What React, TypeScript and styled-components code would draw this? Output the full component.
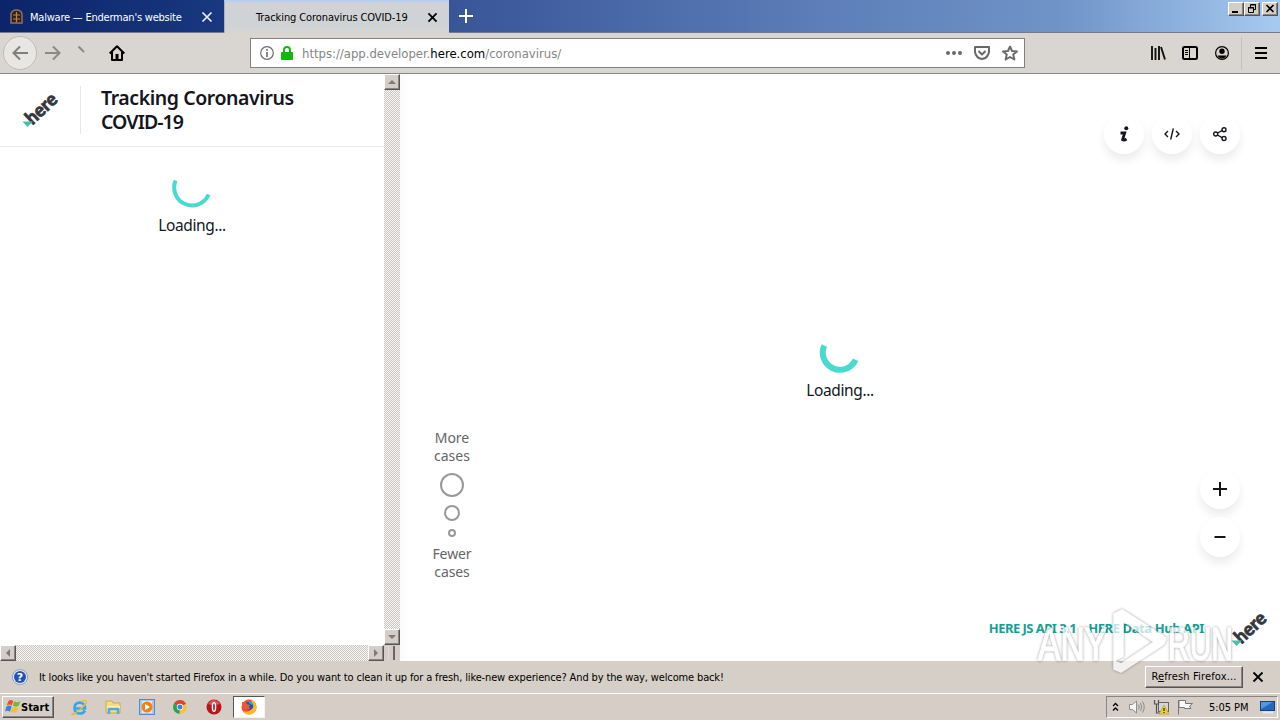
import React from 'react';
import styled, { createGlobalStyle, css } from 'styled-components';

const Global = createGlobalStyle`
  * { box-sizing: border-box; }
  html, body { margin: 0; padding: 0; overflow: hidden; }
  svg { display: block; flex: none; overflow: visible; }
`;

const ui = `"DejaVu Sans Condensed", "DejaVu Sans", sans-serif`;
const web = `"Noto Sans", "Open Sans", sans-serif`;

const raised = css`
  background: #d5cec8;
  border: 1px solid;
  border-color: #fff #555 #555 #fff;
  box-shadow: inset -1px -1px 0 #8a8580;
`;

const Screen = styled.div`
  position: relative;
  width: 1280px;
  height: 720px;
  overflow: hidden;
  display: flex;
  flex-direction: column;
  background: #fff;
  font-family: ${ui};
  font-size: 11px;
  color: #000;
`;

const Label = styled.span<{ $size?: number; $track?: number; $color?: string; $weight?: number; $web?: boolean }>`
  display: block;
  flex: none;
  white-space: pre;
  font-family: ${p => (p.$web ? web : ui)};
  font-size: ${p => p.$size ?? 11}px;
  letter-spacing: ${p => p.$track ?? 0}px;
  color: ${p => p.$color ?? '#000'};
  font-weight: ${p => p.$weight ?? 400};
`;

const Host = styled.span`
  color: #000;
`;

const TabStrip = styled.div`
  height: 33px;
  flex: none;
  display: flex;
  background: linear-gradient(90deg, #0b246a 0, #1c3b85 225px, #3a5799 470px, #5b7cb7 800px, #7093c8 1060px, #a5c9ef 1275px);
  border-bottom: 1px solid #747c8c;
`;

const Tab = styled.div<{ $active?: boolean }>`
  width: ${p => (p.$active ? 225 : 224)}px;
  height: ${p => (p.$active ? 33 : 32)}px;
  display: flex;
  align-items: center;
  padding: ${p => (p.$active ? '0 12px 1px 31px' : '2px 12px 0 10px')};
  background: ${p => (p.$active ? 'linear-gradient(#d0d2d4, #d0d3d6 80%, #d8d5d0)' : 'linear-gradient(90deg, #0b246a, #19387f)')};
  border-top: ${p => (p.$active ? '2px solid #b9cdf0' : '0')};
  border-left: ${p => (p.$active ? '1px solid #a9b0bf' : '0')};
  > :last-child { margin-left: auto; }
`;

const NewTab = styled.div`
  padding: 9px 0 0 10px;
  flex: 1;
`;

const WindowButtons = styled.div`
  display: flex;
  padding: 2px 2px 0 0;
  align-items: flex-start;
`;

const WindowButton = styled.div<{ $gap?: boolean }>`
  ${raised}
  width: 16px;
  height: 14px;
  margin-left: ${p => (p.$gap ? 2 : 0)}px;
`;

const Toolbar = styled.div`
  height: 41px;
  flex: none;
  display: flex;
  align-items: center;
  background: #d9d5d0;
  border-bottom: 1px solid #858585;
`;

const BackButton = styled.div`
  width: 34px;
  height: 34px;
  margin-left: 3px;
  border-radius: 50%;
  border: 1px solid #c0bdb8;
  background: #e8e6e3;
  display: grid;
  place-items: center;
`;

const NavIcons = styled.div`
  display: flex;
  align-items: center;
  width: 213px;
  padding-left: 8px;
`;

const AddressBar = styled.div`
  width: 775px;
  height: 30px;
  display: flex;
  align-items: center;
  padding: 0 6px 0 9px;
  background: #fff;
  border: 1px solid #84817c;
`;

const Pad = styled.div<{ $l?: number; $t?: number }>`
  margin-left: ${p => p.$l ?? 0}px;
  margin-top: ${p => p.$t ?? 0}px;
  flex: none;
`;

const Tools = styled.div`
  margin-left: auto;
  display: flex;
  align-items: center;
`;

const ToolDivider = styled.div`
  width: 1px;
  height: 33px;
  margin: 0 13px 0 12px;
  background: #c3bfba;
`;

const Content = styled.div`
  height: 587px;
  flex: none;
  display: flex;
`;

const Sidebar = styled.div`
  width: 400px;
  display: grid;
  grid-template: 571px 16px / 384px 16px;
`;

const Panel = styled.div`
  display: flex;
  flex-direction: column;
  background: #fff;
`;

const PanelHead = styled.div`
  height: 73px;
  flex: none;
  display: flex;
  align-items: flex-start;
  padding: 12px 0 0 23px;
  border-bottom: 1px solid #ebebec;
`;

const HeadTitle = styled.h1`
  height: 48px;
  margin: 0 0 0 17px;
  padding-left: 20px;
  border-left: 1px solid #e5e6e7;
  font-size: 19px;
  line-height: 24px;
`;

const Loader = styled.div<{ $top: number }>`
  display: flex;
  flex-direction: column;
  align-items: center;
  padding-top: ${p => p.$top}px;
  gap: 7px;
`;

const Scroll = styled.div<{ $row?: boolean }>`
  background: repeating-conic-gradient(#c9c5c0 0 25%, #f8f7f6 0 50%) 0 0 / 2px 2px;
  display: flex;
  flex-direction: ${p => (p.$row ? 'row' : 'column')};
  justify-content: space-between;
`;

const ScrollButton = styled.div`
  ${raised}
  width: 16px;
  height: 16px;
  display: grid;
  place-items: center;
`;

const Corner = styled.div`
  background: #d5cec8;
  padding: 1px 0 0 4px;
  &::before {
    content: '';
    display: block;
    width: 4px;
    height: 14px;
    border-right: 2px solid #666;
    border-left: 1px solid #e2ddd8;
  }
`;

const MapArea = styled.div`
  flex: 1;
  display: grid;
  grid-template-columns: 104px 1fr 104px;
  background: linear-gradient(90deg, #fafafa, #fff 10px);
`;

const Legend = styled.div`
  display: flex;
  flex-direction: column;
  align-items: center;
  padding-top: 355px;
  line-height: 18px;
  text-align: center;
`;

const Ring = styled.div<{ $size: number }>`
  width: ${p => p.$size}px;
  height: ${p => p.$size}px;
  margin-top: 8px;
  border: 2px solid #999;
  border-radius: 50%;
  flex: none;
`;

const MapCenter = styled.div`
  display: flex;
  flex-direction: column;
  height: 587px;
`;

const MapSide = styled.div`
  display: flex;
  flex-direction: column;
  align-items: flex-end;
  height: 587px;
  padding: 40px 40px 0 0;
`;

const ButtonRow = styled.div<{ $column?: boolean; $top?: number }>`
  display: flex;
  flex-direction: ${p => (p.$column ? 'column' : 'row')};
  gap: 8px;
  margin-top: ${p => p.$top ?? 0}px;
`;

const Round = styled.div`
  width: 40px;
  height: 40px;
  border-radius: 50%;
  background: #fff;
  display: grid;
  place-items: center;
  box-shadow: 0 6px 10px rgba(0, 0, 0, 0.08);
`;

const Links = styled.div`
  display: flex;
  gap: 12px;
  margin: auto -28px 0 0;
  padding-bottom: 23px;
  align-self: flex-end;
  line-height: 20px;
`;

const LogoSlot = styled.div`
  margin: 48px -32px 0 0;
`;

const Notice = styled.div`
  height: 32px;
  flex: none;
  display: flex;
  align-items: center;
  padding: 0 17px 0 12px;
  background: #d5cfc7;
`;

const NoticeButton = styled.div`
  ${raised}
  width: 98px;
  height: 22px;
  margin: -1px 10px 0 auto;
  padding-bottom: 1px;
  display: grid;
  place-items: center;
  u { text-underline-offset: 1px; }
`;

const Taskbar = styled.div`
  height: 27px;
  flex: none;
  display: flex;
  align-items: center;
  background: #d5cdc6;
  border-top: 1px solid #fff;
  padding: 0 2px;
`;

const StartButton = styled.div`
  ${raised}
  width: 52px;
  height: 22px;
  display: flex;
  align-items: center;
  padding-left: 2px;
`;

const TaskIcon = styled.div<{ $active?: boolean; $l: number }>`
  width: ${p => (p.$active ? 32 : 18)}px;
  height: 22px;
  margin-left: ${p => p.$l}px;
  display: grid;
  place-items: center;
  background: ${p => (p.$active ? '#fff' : 'transparent')};
  border: ${p => (p.$active ? '1px solid' : '0')};
  border-color: #555 #f5f5f5 #f5f5f5 #555;
`;

const Tray = styled.div`
  width: 172px;
  height: 22px;
  margin-left: auto;
  display: flex;
  align-items: center;
  padding-left: 5px;
  border: 1px solid;
  border-color: #8a8580 #fff #fff #8a8580;
`;

const Watermark = styled.div`
  position: absolute;
  left: 1037px;
  top: 607px;
  opacity: 0.72;
  filter: drop-shadow(0 0 1.5px rgba(0, 0, 0, 0.5));
`;

const Arrow = ({ r }: { r: number }) => (
  <svg width="8" height="8" viewBox="0 0 8 8"><path d="M0 6L4 2L8 6Z" fill="#7e7a76" transform={`rotate(${r} 4 4)`} /></svg>
);

const Close = ({ size = 10, color = '#000', w = 2 }: { size?: number; color?: string; w?: number }) => (
  <svg width={size} height={size} viewBox="0 0 10 10" stroke={color} strokeWidth={w}><path d="M.5.5L9.5 9.5M9.5.5L.5 9.5" /></svg>
);

const HereLogo = () => (
  <svg width="40" height="40" viewBox="0 0 40 40">
    <text x="0" y="0" transform="translate(9.500 39.500) rotate(-43)" fontFamily="Lato, sans-serif" fontWeight="900" fontSize="19" textLength="36" lengthAdjust="spacingAndGlyphs" fill="#353740" stroke="#353740" strokeWidth=".7">here</text>
    <path d="M-.5 35.500H10L4.500 41Z" fill="#49bdb0" />
  </svg>
);

const Spinner = ({ w }: { w: number }) => (
  <svg width="40" height="40" viewBox="0 0 40 40" fill="none" stroke="#48dad0" strokeWidth={w}>
    <path d={w > 4 ? 'M4.300 12.500A17 17 0 0 0 35.600 26.700' : 'M3.600 12.500A17.500 17.500 0 0 0 36.600 26.500'} transform="translate(0 1)" />
  </svg>
);

const Back = ({ flip, color }: { flip?: boolean; color: string }) => (
  <svg width="16" height="16" viewBox="0 0 16 16" fill="none" stroke={color} strokeWidth="2" transform={flip ? 'scale(-1 1)' : undefined}>
    <path d="M8 1.5L1.5 8L8 14.5M1.5 8H16" />
  </svg>
);

export default function App() {
  return (
    <Screen>
      <Global />
      <TabStrip>
        <Tab>
          <svg width="13" height="16" viewBox="0 0 13 16">
            <path d="M1 14V5Q2 1 6.500 1T12 5V14Z" fill="#29231f" stroke="#96705a" strokeWidth="1.500" />
            <path d="M3 6H10M6.500 3V13M3 10H10" stroke="#c9823c" strokeWidth="1.200" />
          </svg>
          <Pad $l={7}><Label $color="#fff" $track={-0.22}>Malware — Enderman's website</Label></Pad>
          <Close color="#e9f1ff" w={1.7} />
        </Tab>
        <Tab $active>
          <Label $track={-0.1}>Tracking Coronavirus COVID-19</Label>
          <Pad><Close size={9} w={2} /></Pad>
        </Tab>
        <NewTab><svg width="14" height="14" stroke="#fff" strokeWidth="2"><path d="M7 0V14M0 7H14" /></svg></NewTab>
        <WindowButtons>
          <WindowButton><svg width="14" height="12"><path d="M3 9H9" stroke="#000" strokeWidth="2" /></svg></WindowButton>
          <WindowButton><svg width="14" height="12" fill="none" stroke="#000"><path d="M5.500 4V1.500H10.500V6.500H8M5 2H11M3.500 4.500H8.500V9.500H3.500ZM3 5H9" /></svg></WindowButton>
          <WindowButton $gap><svg width="14" height="12" stroke="#000" strokeWidth="1.600"><path d="M3.500 2L10.500 9M10.500 2L3.500 9" /></svg></WindowButton>
        </WindowButtons>
      </TabStrip>
      <Toolbar>
        <BackButton><Back color="#817f7c" /></BackButton>
        <NavIcons>
          <Back flip color="#8b8986" />
          <Pad $l={17}><svg width="6" height="16"><path d="M0.500 1.500L6 7" stroke="#8b8986" strokeWidth="2" /></svg></Pad>
          <Pad $l={25}>
            <svg width="16" height="16" viewBox="0 0 16 16" fill="none" stroke="#000" strokeWidth="2"><path d="M.7 8.500L8 1.200L15.300 8.500M3 7V15H13V7" strokeLinejoin="round" /><path d="M8 9V15" strokeWidth="3" /></svg>
          </Pad>
        </NavIcons>
        <AddressBar>
          <svg width="14" height="14" fill="none" stroke="#6c6c6c" strokeWidth="1.200"><circle cx="7" cy="7" r="6.300" /><path d="M7 6V11M7 3V4.700" strokeWidth="1.600" /></svg>
          <Pad $l={7}><svg width="12" height="14"><path d="M3 7V4Q3 1 6 1T9 4V7" fill="none" stroke="#12b80b" strokeWidth="2" /><rect y="6" width="12" height="8" rx="1" fill="#12b80b" /></svg></Pad>
          <Pad $l={9}><Label $size={13} $track={-0.02} $color="#858585">https://app.developer.<Host>here.com</Host>/coronavirus/</Label></Pad>
          <Tools>
            <svg width="16" height="4" fill="#69696b"><circle cx="2" cy="2" r="2" /><circle cx="8" cy="2" r="2" /><circle cx="14" cy="2" r="2" /></svg>
            <Pad $l={12}><svg width="16" height="14" fill="none" stroke="#69696b" strokeWidth="2"><path d="M1 1H15V6Q14 12 8 13Q2 12 1 6ZM4.500 5L8 8.500L11.500 5" strokeLinejoin="round" /></svg></Pad>
            <Pad $l={12}><svg width="16" height="16" fill="none" stroke="#69696b" strokeWidth="1.900"><path d="M8 1.500L10 6L15 6.400L11.200 9.600L12.400 14.500L8 12L3.600 14.500L4.800 9.600L1 6.400L6 6Z" strokeLinejoin="round" /></svg></Pad>
          </Tools>
        </AddressBar>
        <Tools>
          <svg width="16" height="14" stroke="#111" strokeWidth="2"><path d="M2 0V14M5.500 2V14M9 0V14M11 1L15 13.500" strokeWidth="1.900" /></svg>
          <Pad $l={16}><svg width="16" height="14" fill="none" stroke="#000" strokeWidth="2"><rect x="1" y="1" width="14" height="12" rx="1.500" /><path d="M7.500 1V13M3 4.500H6M3 6.500H6M3 8.500H6" strokeWidth="1" /></svg></Pad>
          <Pad $l={17}><svg width="14" height="14"><circle cx="7" cy="7" r="6.400" fill="none" stroke="#000" strokeWidth="1.200" /><circle cx="7" cy="5.300" r="2.700" /><path d="M2.500 9.500H11.500Q10 12.500 7 12.500T2.500 9.500" /></svg></Pad>
          <ToolDivider />
          <svg width="12" height="12" stroke="#000" strokeWidth="2"><path d="M0 1H12M0 6H12M0 11H12" /></svg>
          <Pad $l={13} />
        </Tools>
      </Toolbar>
      <Content>
        <Sidebar>
          <Panel>
            <PanelHead>
              <HereLogo />
              <HeadTitle>
                <Label $web $size={19.5} $track={-0.43} $weight={600} $color="#14161c">Tracking Coronavirus</Label>
                <Label $web $size={19.5} $track={-0.95} $weight={600} $color="#14161c">COVID-19</Label>
              </HeadTitle>
            </PanelHead>
            <Loader $top={20}>
              <Spinner w={4} />
              <Label $web $size={15.5} $track={-0.4} $color="#14161c">Loading...</Label>
            </Loader>
          </Panel>
          <Scroll><ScrollButton><Arrow r={0} /></ScrollButton><ScrollButton><Arrow r={180} /></ScrollButton></Scroll>
          <Scroll $row><ScrollButton><Arrow r={270} /></ScrollButton><ScrollButton><Arrow r={90} /></ScrollButton></Scroll>
          <Corner />
        </Sidebar>
        <MapArea>
          <Legend>
            <Label $web $size={14} $color="#646569">More{'\n'}cases</Label>
            <Ring $size={24} />
            <Ring $size={16} />
            <Ring $size={8} />
            <Pad $t={8}><Label $web $size={14} $track={-0.1} $color="#646569">Fewer{'\n'}cases</Label></Pad>
          </Legend>
          <MapCenter>
            <Loader $top={258}>
              <Spinner w={6} />
              <Label $web $size={15.5} $track={-0.4} $color="#14161c">Loading...</Label>
            </Loader>
            <Links>
              <Label $web $size={13} $track={-0.53} $weight={700} $color="#16a095">HERE JS API 3.1</Label>
              <Label $web $size={13} $track={-0.4} $weight={700} $color="#16a095">HERE Data Hub API</Label>
            </Links>
          </MapCenter>
          <MapSide>
            <ButtonRow>
              <Round><svg width="12" height="16" fill="none" stroke="#14161c" strokeWidth="2.800"><circle cx="8.300" cy="2.300" r="2" fill="#14161c" stroke="none" /><path d="M2.500 7H6.700L4.600 13.700Q6 14.800 8.500 13" /></svg></Round>
              <Round><svg width="16" height="12" fill="none" stroke="#14161c" strokeWidth="1.400"><path d="M4 3L1 6L4 9M12 3L15 6L12 9M9.300 .5L6.700 11.500" /></svg></Round>
              <Round><svg width="14" height="14" fill="none" stroke="#14161c" strokeWidth="1.400"><circle cx="2.700" cy="7" r="2" /><circle cx="11" cy="2.700" r="2" /><circle cx="11" cy="11.500" r="2" /><path d="M4.500 6L9 3.600M4.500 8L9 10.600" /></svg></Round>
            </ButtonRow>
            <ButtonRow $column $top={315}>
              <Round><svg width="14" height="14" stroke="#14161c" strokeWidth="2"><path d="M0 7H14M7 0V14" /></svg></Round>
              <Round><svg width="12" height="4" stroke="#14161c" strokeWidth="2"><path d="M0.500 2H11.500" /></svg></Round>
            </ButtonRow>
            <LogoSlot><HereLogo /></LogoSlot>
          </MapSide>
        </MapArea>
      </Content>
      <Notice>
        <svg width="16" height="16"><circle cx="8" cy="8" r="7.500" fill="#e6ecf7" stroke="#8fa0c4" /><circle cx="8" cy="8" r="6" fill="#2352b8" /><text x="8" y="12" textAnchor="middle" fill="#fff" fontSize="11" fontWeight="700" fontFamily="DejaVu Sans">?</text></svg>
        <Pad $l={11}><Label $track={-0.14}>It looks like you haven't started Firefox in a while. Do you want to clean it up for a fresh, like-new experience? And by the way, welcome back!</Label></Pad>
        <NoticeButton><Label $track={0.15}>R<u>e</u>fresh Firefox...</Label></NoticeButton>
        <Close size={10} w={1.8} />
      </Notice>
      <Taskbar>
        <StartButton>
          <svg width="16" height="16" viewBox="0 1 14.500 14.500"><path d="M3 3Q5 1 7.500 3L6 7Q4 5 1.500 7Z" fill="#e8512b" /><path d="M8.500 3Q11 5 14 3L12.500 7Q10 9 7 7Z" fill="#73b63c" /><path d="M1.200 8Q4 6 6 8L4.500 12.500Q2 11 0 12.500Z" fill="#3b83d2" /><path d="M7 8Q9.500 10 12.300 8L11 12Q8 14.500 5.300 12.500Z" fill="#f6bf2d" /></svg>
          <Label $weight={700}>Start</Label>
        </StartButton>
        <TaskIcon $l={16}>
          <svg width="17" height="17" fill="none"><path d="M14 11.500Q12 15 8.500 14.500Q3.500 14 3.500 9T8.500 3.500Q14 4 14 9.500H4" stroke="#37a5e6" strokeWidth="2.600" /><path d="M2 14Q-1 17 4 14.500Q11 10 15.500 3.500Q16 0 10 2.500" stroke="#e9bd42" strokeWidth="1.400" /></svg>
        </TaskIcon>
        <TaskIcon $l={16}>
          <svg width="17" height="16"><path d="M1 2H7L8 4H15V14H1Z" fill="#f4dc86" stroke="#cda94c" /><path d="M2 7H15V10H2Z" fill="#fdf1b8" /><path d="M4 15V10H13V15" fill="none" stroke="#57a9d8" strokeWidth="2.500" /></svg>
        </TaskIcon>
        <TaskIcon $l={16}>
          <svg width="16" height="16"><rect x=".5" y=".5" width="15" height="15" fill="#a6cbea" stroke="#4c8fc9" /><rect x="3" y="2" width="10" height="12" fill="#dcebf6" /><circle cx="8" cy="8" r="5.500" fill="#f08216" /><path d="M6 5L11 8L6 11Z" fill="#fff" /></svg>
        </TaskIcon>
        <TaskIcon $l={15}>
          <svg width="14" height="14"><circle cx="7" cy="7" r="6.700" fill="#f5c52b" /><path d="M7 7L1 3.600A6.700 6.700 0 0 1 13 3.800Z" fill="#df4132" /><path d="M7 7L1 3.600A6.700 6.700 0 0 0 6.500 13.700Z" fill="#28a253" /><circle cx="7" cy="7" r="3.200" fill="#fff" /><circle cx="7" cy="7" r="2.500" fill="#3f7fe8" /></svg>
        </TaskIcon>
        <TaskIcon $l={16}>
          <svg width="16" height="16"><circle cx="8" cy="8" r="7.500" fill="#b81518" /><path d="M2 5Q8 -3 14 5Q8 7 2 5" fill="#dc5556" /><ellipse cx="8" cy="8" rx="2.300" ry="5" fill="#fff" /><ellipse cx="8" cy="8" rx=".8" ry="3.800" fill="#8e0d10" /></svg>
        </TaskIcon>
        <TaskIcon $active $l={10}>
          <svg width="16" height="16"><circle cx="8" cy="8" r="7.500" fill="#f04b35" /><path d="M10 0Q16 4 15.500 9T9 15.500Q4 16 2 12Q8 14 10 10T10 0" fill="#fdba22" /><circle cx="8" cy="7" r="4.300" fill="#2b50bf" /><path d="M1 3Q5 3 6 5L9 6Q7 8 9 10Q3 12 1 7Z" fill="#f4582d" /><path d="M7 2Q11 2 12 6L9 5Z" fill="#27a9e6" /></svg>
        </TaskIcon>
        <Tray>
          <svg width="8" height="10" fill="none" stroke="#000" strokeWidth="1.300"><path d="M1 4L3.500 1.500L6 4M1 8.500L3.500 6L6 8.500" /></svg>
          <Pad $l={9}><svg width="16" height="14" fill="none" stroke="#8b8b8b"><path d="M.5 4.500H3.500L7.500 1V13L3.500 9.500H.5Z" fill="#f8f8f8" /><path d="M9.500 4.500Q11 7 9.500 9.500M11.500 3Q14 7 11.500 11M13.500 1.500Q17 7 13.500 12.500" /></svg></Pad>
          <Pad $l={8}><svg width="16" height="16"><rect x="5.500" y="3.500" width="10" height="9" fill="#d0d7da" stroke="#666" /><path d="M1.500 1V5H5.500V1M3.500 5V14H8" fill="none" stroke="#555" strokeWidth="1.200" /><path d="M11 6L16 15H6Z" fill="#f5cf25" stroke="#b99405" strokeWidth=".6" /><path d="M11 9V12M11 13V14" stroke="#222" strokeWidth="1.200" /></svg></Pad>
          <Pad $l={8}><svg width="16" height="16" fill="#fbfbfb" stroke="#777"><path d="M1.500 1V15.500M2 1.500H8.500V4.500H15.500L12.500 7L14 9.500H7.500V8.500H2Z" /></svg></Pad>
          <Pad $l={16}><Label $track={-0.05}>5:05 PM</Label></Pad>
          <Pad $l={11}><svg width="16" height="14"><rect x=".5" y="1.500" width="14" height="9" fill="#2468bd" stroke="#183f77" /><path d="M1 2H13L1 9Z" fill="#5597df" /><path d="M3 12.500H13" stroke="#e5e8ec" strokeWidth="2" /></svg></Pad>
        </Tray>
      </Taskbar>
      <Watermark>
        <svg width="200" height="70" fill="#fff" stroke="#fff" strokeWidth="1.500">
          <text x="1" y="53" fontFamily="Liberation Sans, sans-serif" fontSize="46" textLength="69" lengthAdjust="spacingAndGlyphs">ANY</text>
          <path d="M77 7L85 3L129 31L127 37L84 65L77 62V54L84 57L117 35L86 14V49L77 54Z" strokeLinejoin="round" />
          <text x="131" y="53" fontFamily="Liberation Sans, sans-serif" fontSize="46" textLength="65" lengthAdjust="spacingAndGlyphs">RUN</text>
        </svg>
      </Watermark>
    </Screen>
  );
}
